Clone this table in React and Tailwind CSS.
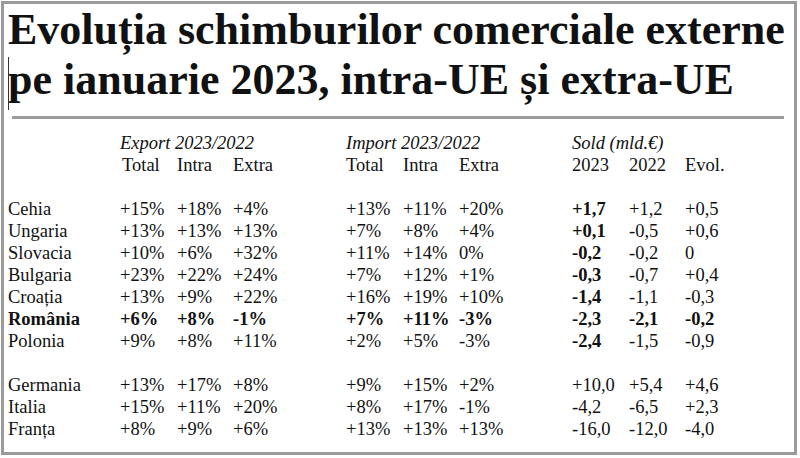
import React from "react";

const rows = [
  { name: "Cehia", exp: ["+15%", "+18%", "+4%"], imp: ["+13%", "+11%", "+20%"], sold: ["+1,7", "+1,2", "+0,5"], boldFirst: true },
  { name: "Ungaria", exp: ["+13%", "+13%", "+13%"], imp: ["+7%", "+8%", "+4%"], sold: ["+0,1", "-0,5", "+0,6"], boldFirst: true },
  { name: "Slovacia", exp: ["+10%", "+6%", "+32%"], imp: ["+11%", "+14%", "0%"], sold: ["-0,2", "-0,2", "0"], boldFirst: true },
  { name: "Bulgaria", exp: ["+23%", "+22%", "+24%"], imp: ["+7%", "+12%", "+1%"], sold: ["-0,3", "-0,7", "+0,4"], boldFirst: true },
  { name: "Croa\u021Bia", exp: ["+13%", "+9%", "+22%"], imp: ["+16%", "+19%", "+10%"], sold: ["-1,4", "-1,1", "-0,3"], boldFirst: true },
  { name: "România", exp: ["+6%", "+8%", "-1%"], imp: ["+7%", "+11%", "-3%"], sold: ["-2,3", "-2,1", "-0,2"], bold: true },
  { name: "Polonia", exp: ["+9%", "+8%", "+11%"], imp: ["+2%", "+5%", "-3%"], sold: ["-2,4", "-1,5", "-0,9"], boldFirst: true },
  null,
  { name: "Germania", exp: ["+13%", "+17%", "+8%"], imp: ["+9%", "+15%", "+2%"], sold: ["+10,0", "+5,4", "+4,6"] },
  { name: "Italia", exp: ["+15%", "+11%", "+20%"], imp: ["+8%", "+17%", "-1%"], sold: ["-4,2", "-6,5", "+2,3"] },
  { name: "Fran\u021Ba", exp: ["+8%", "+9%", "+6%"], imp: ["+13%", "+13%", "+13%"], sold: ["-16,0", "-12,0", "-4,0"] },
];

const App = () => {
  return (
    <div className="w-[800px] h-[458px] bg-white pt-[1px] pl-[1px] font-['Liberation_Serif','Times_New_Roman',serif] text-[#111]">
      <div className="w-[796px] h-[454px] border-[3px] border-[#9b9b9b]">
        {/* Title */}
        <div className="relative pl-[4px] pt-[1px]">
          <span className="absolute left-[4px] top-[53px] w-[1px] h-[53px] bg-[#333]" />
          <h1 className="text-[44px] leading-[50px] font-bold whitespace-nowrap">
            Evolu{"\u021B"}ia schimburilor comerciale externe
            <br />
            pe ianuarie 2023, intra-UE {"\u0219"}i extra-UE
          </h1>
        </div>
        <div className="ml-[8px] mr-[10px] mt-[11px] h-[3px] bg-[#9b9b9b]" />

        {/* Table */}
        <div className="mt-[13px] pl-[4px] grid grid-cols-[112px_57px_56px_113px_57px_56px_113px_57px_56px_1fr] auto-rows-[22px] text-[18.5px] leading-[22px] whitespace-nowrap">
          <div />
          <div className="col-span-3 italic">Export 2023/2022</div>
          <div className="col-span-3 italic">Import 2023/2022</div>
          <div className="col-span-3 italic">Sold (mld.€)</div>

          <div />
          <div className="pl-[2px]">Total</div>
          <div>Intra</div>
          <div>Extra</div>
          <div>Total</div>
          <div>Intra</div>
          <div>Extra</div>
          <div>2023</div>
          <div>2022</div>
          <div>Evol.</div>

          <div className="col-span-10" />

          {rows.map((r, i) =>
            r === null ? (
              <div key={i} className="col-span-10" />
            ) : (
              <React.Fragment key={i}>
                <div className={r.bold ? "font-bold" : ""}>{r.name}</div>
                {r.exp.map((v, j) => (
                  <div key={"e" + j} className={r.bold ? "font-bold" : ""}>{v}</div>
                ))}
                {r.imp.map((v, j) => (
                  <div key={"i" + j} className={r.bold ? "font-bold" : ""}>{v}</div>
                ))}
                {r.sold.map((v, j) => (
                  <div key={"s" + j} className={r.bold || (r.boldFirst && j === 0) ? "font-bold" : ""}>{v}</div>
                ))}
              </React.Fragment>
            )
          )}
        </div>
      </div>
    </div>
  );
};

export default App;
